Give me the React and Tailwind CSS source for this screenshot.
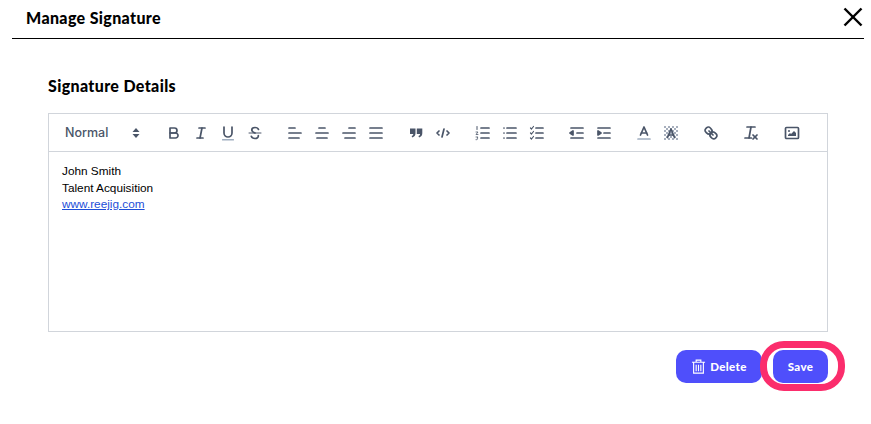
import React from "react";

const Icon = ({ children }) => (
  <button className="flex h-[24px] w-[27px] shrink-0 items-center justify-center">
    <svg
      viewBox="0 0 18 18"
      className="h-[18px] w-[18px] fill-none stroke-[#4a5568] stroke-[1.7]"
      strokeLinecap="round"
      strokeLinejoin="round"
    >
      {children}
    </svg>
  </button>
);

const Group = ({ children, className = "mr-[13px]" }) => <div className={`flex ${className}`}>{children}</div>;

const Toolbar = () => (
  <div className="flex h-[38px] items-center border-b border-[#d1d5db] pl-[16px] pr-2">
    <div className="flex w-[95px] items-center justify-between pr-[20px] pt-[1px] text-[12.5px] font-medium text-[#4a5568] [font-family:Inter,sans-serif]">
      <span>Normal</span>
      <svg viewBox="0 0 8 10" className="h-[10px] w-[8px] fill-[#4a5568]">
        <polygon points="4,0 7.5,4 0.5,4" />
        <polygon points="4,10 7.5,6 0.5,6" />
      </svg>
    </div>
    <Group>
      <Icon>
        <path d="M5,4H9.5A2.5,2.5,0,0,1,12,6.5v0A2.5,2.5,0,0,1,9.5,9H5V4Z" />
        <path d="M5,9h5.5A2.5,2.5,0,0,1,13,11.5v0A2.5,2.5,0,0,1,10.5,14H5V9Z" />
      </Icon>
      <Icon>
        <line x1="7" x2="13" y1="4" y2="4" />
        <line x1="5" x2="11" y1="14" y2="14" />
        <line x1="8" x2="10" y1="14" y2="4" />
      </Icon>
      <Icon>
        <path d="M5,3V9a4,4,0,0,0,4,4H9a4,4,0,0,0,4-4V3" />
        <rect height="1.4" rx=".5" width="12" x="3" y="15" className="fill-[#a0aec0] stroke-none" />
      </Icon>
      <Icon>
        <line x1="3" x2="15" y1="9" y2="9" className="stroke-1" />
        <path d="M12.5,5.5C12,4,10.5,3.5,9,3.5c-1.7,0-3.2.8-3.2,2.4,0,1.4,1.2,2.2,3.2,3.1" />
        <path d="M12.3,11.5c.4,2-1.5,3-3.3,3s-3.2-.7-3.7-2.2" />
      </Icon>
    </Group>
    <Group>
      <Icon>
        <line x1="3" x2="15" y1="9" y2="9" />
        <line x1="3" x2="13" y1="14" y2="14" />
        <line x1="3" x2="9" y1="4" y2="4" />
      </Icon>
      <Icon>
        <line x1="14" x2="4" y1="14" y2="14" />
        <line x1="12" x2="6" y1="4" y2="4" />
        <line x1="15" x2="3" y1="9" y2="9" />
      </Icon>
      <Icon>
        <line x1="15" x2="3" y1="9" y2="9" />
        <line x1="15" x2="5" y1="14" y2="14" />
        <line x1="15" x2="9" y1="4" y2="4" />
      </Icon>
      <Icon>
        <line x1="15" x2="3" y1="9" y2="9" />
        <line x1="15" x2="3" y1="14" y2="14" />
        <line x1="15" x2="3" y1="4" y2="4" />
      </Icon>
    </Group>
    <Group>
      <Icon>
        <path d="M3,4.5h5.5v4.8c0,2.2-1.2,3.5-3.2,4.2l-.7-1.4c1.1-.4,1.6-1.1,1.7-2H3Z" className="fill-[#4a5568] stroke-none" />
        <path d="M9.8,4.5h5.5v4.8c0,2.2-1.2,3.5-3.2,4.2l-.7-1.4c1.1-.4,1.6-1.1,1.7-2H9.8Z" className="fill-[#4a5568] stroke-none" />
      </Icon>
      <Icon>
        <polyline points="5 7 3 9 5 11" />
        <polyline points="13 7 15 9 13 11" />
        <line x1="10" x2="8" y1="5" y2="13" />
      </Icon>
    </Group>
    <Group>
      <Icon>
        <line x1="7" x2="15" y1="4" y2="4" />
        <line x1="7" x2="15" y1="9" y2="9" />
        <line x1="7" x2="15" y1="14" y2="14" />
        <line x1="3" x2="3" y1="2.5" y2="5.5" className="stroke-1" />
        <path d="M2,8h2L2,10.5h2" className="stroke-[0.8]" />
        <path d="M2,13h2l-1,1.2c1,0,1,1.8-1,1.5" className="stroke-[0.8]" />
      </Icon>
      <Icon>
        <line x1="6" x2="15" y1="4" y2="4" />
        <line x1="6" x2="15" y1="9" y2="9" />
        <line x1="6" x2="15" y1="14" y2="14" />
        <line x1="3" x2="3" y1="4" y2="4" />
        <line x1="3" x2="3" y1="9" y2="9" />
        <line x1="3" x2="3" y1="14" y2="14" />
      </Icon>
      <Icon>
        <line x1="8" x2="15" y1="4" y2="4" />
        <line x1="8" x2="15" y1="9" y2="9" />
        <line x1="8" x2="15" y1="14" y2="14" />
        <polyline points="2.5 4 3.5 5 5.5 2.5" className="stroke-[1.2]" />
        <polyline points="2.5 9 3.5 10 5.5 7.5" className="stroke-[1.2]" />
        <polyline points="2.5 14 3.5 15 5.5 12.5" className="stroke-[1.2]" />
      </Icon>
    </Group>
    <Group className="mr-[13.5px]">
      <Icon>
        <line x1="3" x2="15" y1="14" y2="14" />
        <line x1="3" x2="15" y1="4" y2="4" />
        <line x1="9" x2="15" y1="9" y2="9" />
        <polygon points="5 7 5 11 2 9" className="fill-[#4a5568]" />
      </Icon>
      <Icon>
        <line x1="3" x2="15" y1="14" y2="14" />
        <line x1="3" x2="15" y1="4" y2="4" />
        <line x1="9" x2="15" y1="9" y2="9" />
        <polygon points="3 7 3 11 6 9" className="fill-[#4a5568]" />
      </Icon>
    </Group>
    <Group>
      <Icon>
        <line x1="3" x2="15" y1="15" y2="15" className="stroke-[#a0aec0]" />
        <polyline points="5.5 11 9 3 12.5 11" />
        <line x1="11.6" x2="6.4" y1="9" y2="9" />
      </Icon>
      <Icon>
        <g className="fill-[#a7afbd] stroke-none">
          {[2, 4, 6, 8, 10, 12, 14].map((y) =>
            [2, 4, 6, 8, 10, 12, 14].map((x) =>
              (x + y) % 4 === 0 ? <rect key={`${x}-${y}`} x={x} y={y} width="2" height="2" /> : null
            )
          )}
        </g>
        <polyline points="5.5 13.5 9 5 12.5 13.5" />
        <line x1="11.6" x2="6.4" y1="11" y2="11" />
      </Icon>
    </Group>
    <Group>
      <Icon>
        <line x1="7" x2="11" y1="7" y2="11" />
        <path d="M8.9,4.6a3.5,3.5,0,0,1,.4,4.7A3.5,3.5,0,0,1,4.6,8.9C3.2,7.5,2,6.4,4.2,4.2S7.5,3.2,8.9,4.6Z" />
        <path d="M13.4,9.1a3.5,3.5,0,0,0-4.7-.4,3.5,3.5,0,0,0,.4,4.7c1.4,1.4,2.5,2.5,4.7.4S14.8,10.5,13.4,9.1Z" />
      </Icon>
    </Group>
    <Group className="mr-[14px]">
      <Icon>
        <line x1="5" x2="13" y1="3" y2="3" />
        <line x1="3" x2="9.4" y1="14" y2="14" />
        <line x1="7" x2="9" y1="14" y2="3" />
        <line x1="11" x2="15" y1="11" y2="15" />
        <line x1="11" x2="15" y1="15" y2="11" />
      </Icon>
    </Group>
    <Icon>
      <rect height="11" width="13" x="2.5" y="3.5" rx="1" />
      <circle cx="6" cy="7" r="1" className="fill-[#4a5568] stroke-none" />
      <polyline points="5 12 5 11 7 9 8 10 11 7 13 9 13 12 5 12" className="fill-[#4a5568] stroke-none" />
    </Icon>
  </div>
);

const App = () => {
  return (
    <div className="h-[424px] w-[871px] overflow-hidden bg-white pl-[12px] pr-[7px] text-black [font-family:Lato,sans-serif]">
      <div className="flex h-[39px] items-center justify-between border-b border-black pl-[14px] pb-[3px]">
        <h1 className="text-[16px] font-black tracking-[0.35px]">Manage Signature</h1>
        <svg viewBox="0 0 20 20" className="mb-[1px] mr-[1px] h-[20px] w-[20px] stroke-black stroke-[2.4]">
          <line x1="1.5" y1="1.5" x2="18.5" y2="18.5" />
          <line x1="18.5" y1="1.5" x2="1.5" y2="18.5" />
        </svg>
      </div>

      <div className="pl-[36px] pt-[37px]">
        <h2 className="text-[16px] font-black leading-[20px] tracking-[0.35px]">Signature Details</h2>

        <div className="mt-[17px] h-[219px] w-[780px] border border-[#d1d5db]">
          <Toolbar />
          <div className="pl-[13px] pt-[11px] text-[11.8px] leading-[16.5px] [font-family:'Liberation_Sans',sans-serif]">
            <p>John Smith</p>
            <p>Talent Acquisition</p>
            <p>
              <a href="#" className="text-[#1d4ed8] underline">
                www.reejig.com
              </a>
            </p>
          </div>
        </div>

        <div className="mt-[18px] flex w-[780px] justify-end gap-[11px]">
          <button className="flex h-[33px] w-[86px] items-center justify-center gap-[4px] rounded-[10px] bg-[#4f4ffb] text-[11.5px] font-black tracking-[0.4px] text-white">
            <svg viewBox="0 0 16 16" className="h-[15px] w-[15px] fill-none stroke-white stroke-[1.2]">
              <path d="M1 3.5h14M5.5 3.5V1.2h5v2.3M2.8 3.5V15h10.4V3.5M5.5 6v7M8 6v7M10.5 6v7" />
            </svg>
            Delete
          </button>
          <div className="relative">
            <button className="flex h-[33px] w-[55px] items-center justify-center rounded-[10px] bg-[#4f4ffb] text-[11.5px] font-black tracking-[0.4px] text-white">
              Save
            </button>
            <div className="absolute left-[-13px] top-[-9px] h-[50px] w-[85px] rounded-[24px] border-[7px] border-[#fb2d6c]" />
          </div>
        </div>
      </div>
    </div>
  );
};

export default App;
